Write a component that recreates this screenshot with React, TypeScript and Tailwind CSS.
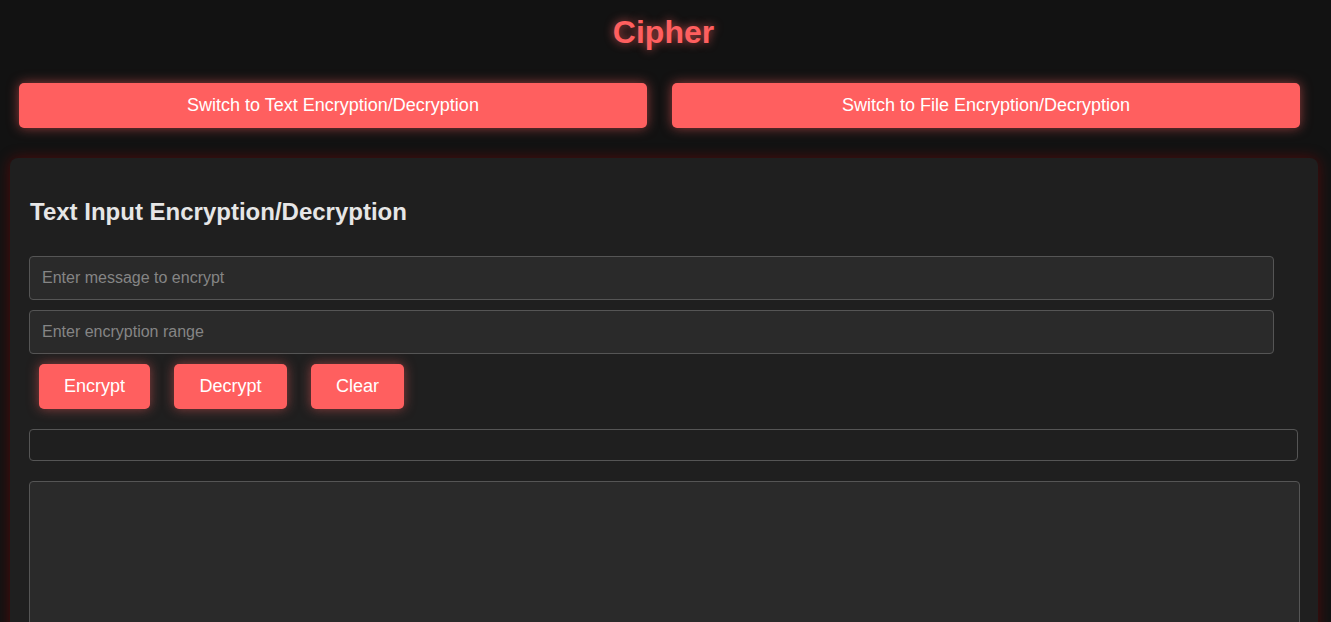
import React from 'react';

const font = { fontFamily: '"Liberation Sans", Arial, sans-serif' };

export default function App() {
  return (
    <div className="min-h-[622px] w-full overflow-hidden bg-[#121212]" style={font}>
      <h1 className="pt-[14px] pr-[4px] text-center text-[32px] font-bold leading-[37px] text-[#ff5f5f] [text-shadow:0_0_10px_rgba(255,95,95,0.7)]">
        Cipher
      </h1>

      <div className="mt-[32px] flex gap-[25px] pl-[19px]">
        <button className="h-[45px] w-[628px] rounded-[5px] bg-[#ff5f5f] text-[18px] text-white shadow-[0_0_12px_rgba(255,95,95,0.55)]">
          Switch to Text Encryption/Decryption
        </button>
        <button className="h-[45px] w-[628px] rounded-[5px] bg-[#ff5f5f] text-[18px] text-white shadow-[0_0_12px_rgba(255,95,95,0.55)]">
          Switch to File Encryption/Decryption
        </button>
      </div>

      <div className="mt-[30px] ml-[10px] w-[1308px] rounded-[8px] bg-[#1f1f1f] px-[19px] pt-[40px] pb-[40px] shadow-[0_0_14px_rgba(150,0,0,0.45)]">
        <h2 className="text-[24px] font-bold leading-[28px] text-[#e6e6e6] pl-[1px]">
          Text Input Encryption/Decryption
        </h2>

        <input
          className="mt-[30px] block h-[44px] w-[1245px] rounded-[4px] border border-[#555] bg-[#2a2a2a] px-[12px] text-[16px] text-white outline-none placeholder:text-[#858585]"
          placeholder="Enter message to encrypt"
        />
        <input
          className="mt-[10px] block h-[44px] w-[1245px] rounded-[4px] border border-[#555] bg-[#2a2a2a] px-[12px] text-[16px] text-white outline-none placeholder:text-[#858585]"
          placeholder="Enter encryption range"
        />

        <div className="mt-[10px] flex gap-[24px] pl-[10px]">
          <button className="h-[45px] w-[111px] rounded-[5px] bg-[#ff5f5f] text-[18px] text-white shadow-[0_0_12px_rgba(255,95,95,0.5)]">
            Encrypt
          </button>
          <button className="h-[45px] w-[113px] rounded-[5px] bg-[#ff5f5f] text-[18px] text-white shadow-[0_0_12px_rgba(255,95,95,0.5)]">
            Decrypt
          </button>
          <button className="h-[45px] w-[93px] rounded-[5px] bg-[#ff5f5f] text-[18px] text-white shadow-[0_0_12px_rgba(255,95,95,0.5)]">
            Clear
          </button>
        </div>

        <div className="mt-[20px] h-[32px] w-[1269px] rounded-[4px] border border-[#555] bg-[#1f1f1f]" />

        <textarea className="mt-[20px] block h-[200px] w-[1271px] resize-none rounded-[4px] border border-[#555] bg-[#2a2a2a] outline-none" />
      </div>
    </div>
  );
}
